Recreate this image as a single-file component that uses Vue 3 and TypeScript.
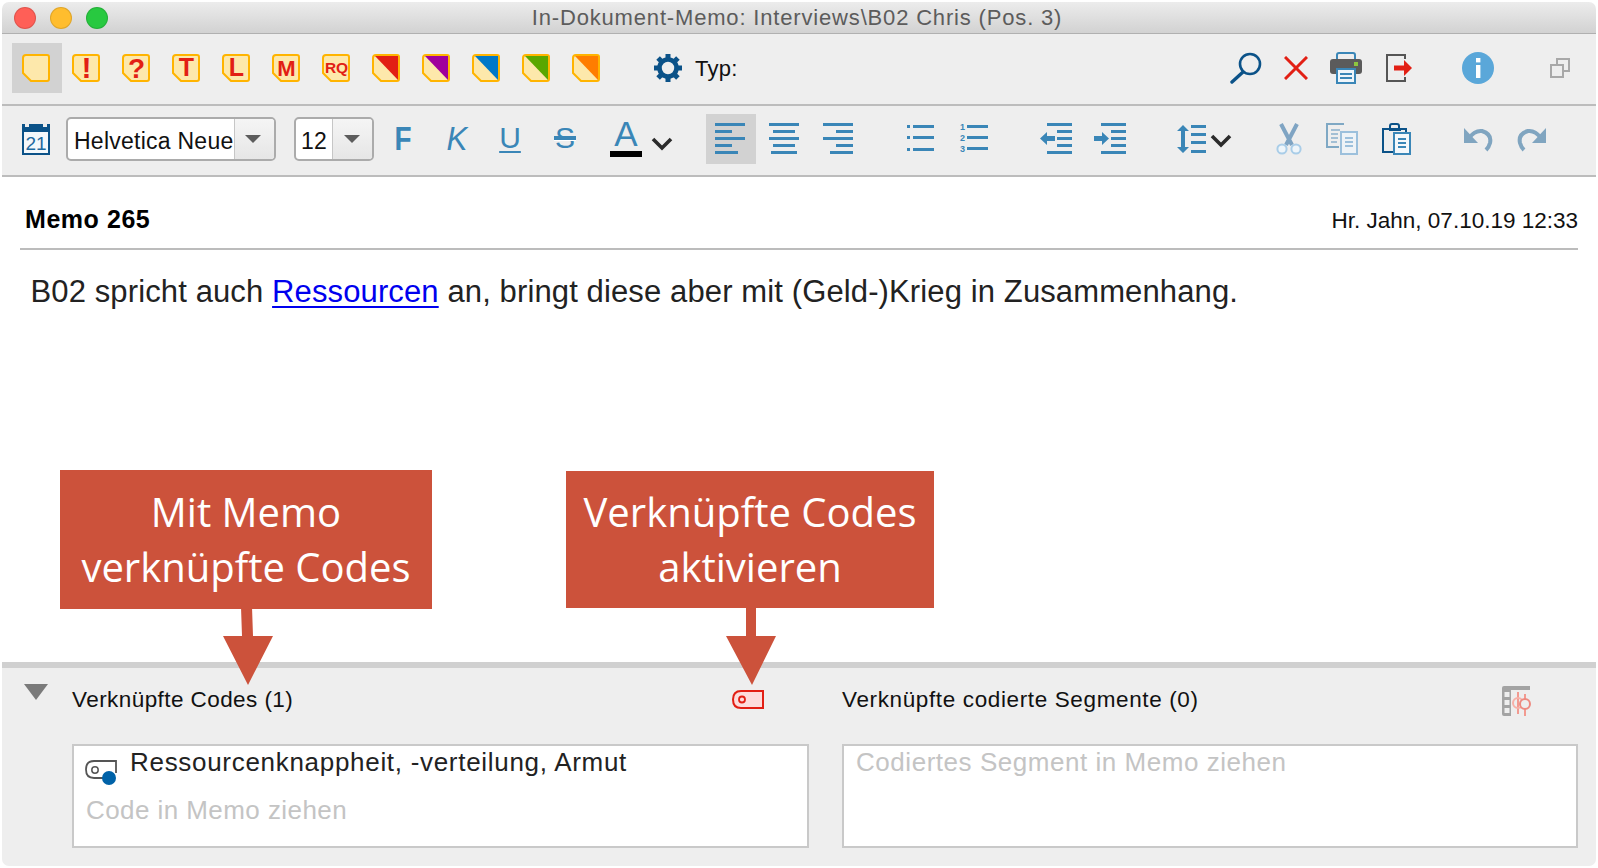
<script setup lang="ts">
interface Note { label?: string; size?: number; base?: number; corner?: string }
const notes: Note[] = [
  {},
  { label: '!', size: 30, base: 24 },
  { label: '?', size: 28, base: 24 },
  { label: 'T', size: 25, base: 22 },
  { label: 'L', size: 25, base: 22 },
  { label: 'M', size: 22, base: 22 },
  { label: 'RQ', size: 15.5, base: 19 },
  { corner: '#e21f14' },
  { corner: '#a0009c' },
  { corner: '#0078c8' },
  { corner: '#5aa700' },
  { corner: '#ff7d00' },
]
</script>

<template>
  <div class="window">
    <header class="titlebar">
      <div class="lights">
        <span class="light red"></span>
        <span class="light yellow"></span>
        <span class="light green"></span>
      </div>
      <span class="title">In-Dokument-Memo: Interviews\B02 Chris (Pos. 3)</span>
    </header>

    <div class="toolbar firstbar">
      <button
        v-for="(n, i) in notes"
        :key="i"
        class="cell"
        :class="{ on: i === 0 }"
      >
        <svg class="note" width="28" height="28" viewBox="0 0 28 28">
          <path d="M4 1H25Q27 1 27 3V25Q27 27 25 27H9L1 19V4Q1 1 4 1Z" fill="#fde8ab" stroke="#ffb400" stroke-width="2" />
          <path v-if="n.corner" d="M3 2H26V26Z" :fill="n.corner" />
          <text
            v-if="n.label"
            x="14.5"
            :y="n.base"
            text-anchor="middle"
            class="noteletter"
            :font-size="n.size"
          >{{ n.label }}</text>
        </svg>
      </button>

      <svg class="gear" width="28" height="28" viewBox="0 0 28 28">
        <circle cx="14" cy="14" r="8.5" fill="none" stroke="#0b5288" stroke-width="4.6" />
        <g fill="#0b5288">
          <rect x="11.5" y="0" width="5" height="6" />
          <rect x="11.5" y="22" width="5" height="6" />
          <rect x="0" y="11.5" width="6" height="5" />
          <rect x="22" y="11.5" width="6" height="5" />
          <rect x="11.5" y="0" width="5" height="6" transform="rotate(45 14 14)" />
          <rect x="11.5" y="22" width="5" height="6" transform="rotate(45 14 14)" />
          <rect x="0" y="11.5" width="6" height="5" transform="rotate(45 14 14)" />
          <rect x="22" y="11.5" width="6" height="5" transform="rotate(45 14 14)" />
        </g>
      </svg>
      <span class="typ">Typ:</span>

      <svg class="search" width="32" height="32" viewBox="0 0 32 32">
        <circle cx="20" cy="12" r="10" fill="none" stroke="#0b5288" stroke-width="2.6" />
        <path d="M13 20L2 30" stroke="#0b5288" stroke-width="3.4" stroke-linecap="round" />
      </svg>
      <svg class="close" width="24" height="24" viewBox="0 0 24 24">
        <path d="M1 1L23 23M23 1L1 23" stroke="#e21f14" stroke-width="3" />
      </svg>
      <svg class="printer" width="32" height="32" viewBox="0 0 32 32">
        <path d="M7 8V3Q7 1 9 1H23Q25 1 25 3V8" fill="none" stroke="#3a86b7" stroke-width="2" />
        <path d="M3 7H29Q32 7 32 10V19Q32 22 29 22H3Q0 22 0 19V10Q0 7 3 7Z" fill="#5b5b5b" />
        <rect x="24" y="10" width="4" height="4" fill="#8dc63f" />
        <rect x="7" y="17" width="18" height="14" fill="#eef5fa" stroke="#3a86b7" stroke-width="2" />
        <path d="M10 22H22M10 26H22" stroke="#3a86b7" stroke-width="2" />
      </svg>
      <svg class="export" width="26" height="28" viewBox="0 0 26 28">
        <path d="M19 5V1H1V27H19V23" fill="none" stroke="#555" stroke-width="2" />
        <path d="M8 11.5H18V6L26 14L18 22V16.5H8Z" fill="#e21f14" />
      </svg>
      <svg class="info" width="32" height="32" viewBox="0 0 32 32">
        <circle cx="16" cy="16" r="16" fill="#5aa7d9" />
        <rect x="14" y="6" width="4.4" height="4.4" fill="#fff" />
        <rect x="14" y="13" width="4.4" height="13" fill="#fff" />
      </svg>
      <svg class="winicon" width="20" height="20" viewBox="0 0 20 20">
        <path d="M7 7V1H19V13H13M1 7H13V19H1Z" fill="none" stroke="#a8a8a8" stroke-width="2" />
      </svg>
    </div>

    <div class="toolbar second">
      <svg class="calendar" width="28" height="31" viewBox="0 0 28 31">
        <rect width="28" height="31" fill="#0b5288" />
        <rect x="2" y="8" width="24" height="21" fill="#f4f8fb" />
        <rect x="3" y="0" width="4" height="3" fill="#eee" />
        <rect x="21" y="0" width="4" height="3" fill="#eee" />
        <text x="14" y="26" text-anchor="middle" class="caltext">21</text>
      </svg>

      <div class="combo fontcombo">
        <span class="value">Helvetica Neue</span>
        <span class="drop"><i class="caret"></i></span>
      </div>
      <div class="combo sizecombo">
        <span class="value">12</span>
        <span class="drop"><i class="caret"></i></span>
      </div>

      <span class="fmt bold">F</span>
      <span class="fmt ital">K</span>
      <span class="fmt under">U</span>
      <span class="fmt strike">S</span>
      <span class="fmt color">A</span>
      <svg class="chev1" width="28" height="32" viewBox="0 0 28 32">
        <path d="M5 16L14 25L23 16" fill="none" stroke="#2b2b2b" stroke-width="3.6" />
      </svg>

      <button class="cell alignbtn on">
        <svg width="50" height="50" viewBox="0 0 50 50" fill="#3a86b7">
          <rect x="9" y="9" width="30" height="3" />
          <rect x="9" y="16" width="17" height="3" />
          <rect x="9" y="23" width="30" height="3" />
          <rect x="9" y="30" width="17" height="3" />
          <rect x="9" y="37" width="23" height="3" />
        </svg>
      </button>
      <button class="cell aligncenter">
        <svg width="50" height="50" viewBox="0 0 50 50" fill="#3a86b7">
          <rect x="10" y="9" width="30" height="3" />
          <rect x="14" y="16" width="22" height="3" />
          <rect x="10" y="23" width="30" height="3" />
          <rect x="14" y="30" width="22" height="3" />
          <rect x="12" y="37" width="26" height="3" />
        </svg>
      </button>
      <button class="cell alignright">
        <svg width="50" height="50" viewBox="0 0 50 50" fill="#3a86b7">
          <rect x="10" y="9" width="30" height="3" />
          <rect x="23" y="16" width="17" height="3" />
          <rect x="10" y="23" width="30" height="3" />
          <rect x="23" y="30" width="17" height="3" />
          <rect x="17" y="37" width="23" height="3" />
        </svg>
      </button>

      <svg class="list" width="32" height="32" viewBox="0 0 32 32" fill="#3a86b7">
        <rect x="3" y="2" width="3" height="3" />
        <rect x="3" y="13" width="3" height="3" />
        <rect x="3" y="25" width="3" height="3" />
        <rect x="9" y="2" width="21" height="3" />
        <rect x="9" y="13" width="21" height="3" />
        <rect x="9" y="25" width="21" height="3" />
      </svg>
      <svg class="numlist" width="32" height="32" viewBox="0 0 32 32" fill="#3a86b7">
        <text x="2" y="7" class="num">1</text>
        <text x="2" y="18" class="num">2</text>
        <text x="2" y="29" class="num">3</text>
        <rect x="9" y="2" width="21" height="3" />
        <rect x="9" y="13" width="21" height="3" />
        <rect x="9" y="24" width="21" height="3" />
      </svg>
      <svg class="outdent" width="32" height="32" viewBox="0 0 32 32" fill="#3a86b7">
        <rect x="7" y="0" width="25" height="3" />
        <rect x="17" y="7" width="15" height="3" />
        <rect x="17" y="14" width="15" height="3" />
        <rect x="17" y="21" width="15" height="3" />
        <rect x="7" y="28" width="25" height="3" />
        <path d="M0 15.5L7 9V13H15V18H7V22Z" />
      </svg>
      <svg class="indent" width="32" height="32" viewBox="0 0 32 32" fill="#3a86b7">
        <rect x="7" y="0" width="25" height="3" />
        <rect x="17" y="7" width="15" height="3" />
        <rect x="17" y="14" width="15" height="3" />
        <rect x="17" y="21" width="15" height="3" />
        <rect x="7" y="28" width="25" height="3" />
        <path d="M15 15.5L8 9V13H0V18H8V22Z" />
      </svg>
      <svg class="spacing" width="30" height="32" viewBox="0 0 30 32" fill="#3a86b7">
        <path d="M6 2L12 8H8V24H12L6 30L0 24H4V8H0Z" />
        <rect x="14" y="2" width="15" height="3" />
        <rect x="14" y="10" width="15" height="3" />
        <rect x="14" y="18" width="15" height="3" />
        <rect x="14" y="27" width="15" height="3" />
      </svg>
      <svg class="chev2" width="28" height="32" viewBox="0 0 28 32">
        <path d="M5 13L14 22L23 13" fill="none" stroke="#2b2b2b" stroke-width="3.6" />
      </svg>

      <svg class="scissors" width="32" height="32" viewBox="0 0 32 32">
        <path d="M8 1L19 22M24 1L13 22" stroke="#7fa4c3" stroke-width="4" fill="none" />
        <circle cx="9" cy="26" r="4.6" fill="#eef5fa" stroke="#a9cde8" stroke-width="2" />
        <circle cx="23" cy="26" r="4.6" fill="#eef5fa" stroke="#a9cde8" stroke-width="2" />
      </svg>
      <svg class="copy" width="32" height="32" viewBox="0 0 32 32" fill="none">
        <path d="M18 1H1V24H13" stroke="#7fa8c4" stroke-width="2" />
        <path d="M5 7H14M5 11H12M5 15H12M5 19H11" stroke="#a3bfd4" stroke-width="2" />
        <path d="M15 9H31V31H15Z" fill="#eef3f7" stroke="#9cc0dc" stroke-width="2" />
        <path d="M19 15H27M19 19H27M19 23H27" stroke="#9cc0dc" stroke-width="2" />
      </svg>
      <svg class="paste" width="32" height="32" viewBox="0 0 32 32" fill="none">
        <path d="M13 29H3V6H10V3Q10 1 12 1H17Q19 1 19 3V6H26V9" stroke="#0b5288" stroke-width="2" />
        <rect x="9" y="5" width="12" height="3" fill="#0b5288" />
        <path d="M14 10H30V31H14Z" fill="#f4f8fb" stroke="#3a86b7" stroke-width="2" />
        <path d="M18 16H26M18 20H26M18 24H26" stroke="#3a86b7" stroke-width="2" />
      </svg>
      <svg class="undo" width="32" height="32" viewBox="0 0 32 32" fill="none">
        <path d="M2 5V20H16Z" fill="#80a5c0" />
        <path d="M7 15Q13 7 20 8Q30 11 28 20Q27 24 24 27" stroke="#80a5c0" stroke-width="4" />
      </svg>
      <svg class="redo" width="32" height="32" viewBox="0 0 32 32" fill="none">
        <path d="M30 5V20H16Z" fill="#80a5c0" />
        <path d="M25 15Q19 7 12 8Q2 11 4 20Q5 24 8 27" stroke="#80a5c0" stroke-width="4" />
      </svg>
    </div>

    <main class="memo">
      <div class="memohead">
        <strong class="memotitle">Memo 265</strong>
        <span class="memometa">Hr. Jahn, 07.10.19 12:33</span>
      </div>
      <p class="memotext">B02 spricht auch <a class="link">Ressourcen</a> an, bringt diese aber mit (Geld-)Krieg in Zusammenhang.</p>

      <div class="callout c1">Mit Memo<br />verknüpfte Codes</div>
      <div class="callout c2">Verknüpfte Codes<br />aktivieren</div>
      <svg class="arrow a1" width="52" height="78" viewBox="0 0 52 78">
        <path d="M19 0H30L31 29H51L26 78L1 29H20Z" fill="#cc523b" />
      </svg>
      <svg class="arrow a2" width="52" height="78" viewBox="0 0 52 78">
        <path d="M20 0H30L30 29H50L26 78L0 29H20Z" fill="#cc523b" />
      </svg>
    </main>

    <section class="panel">
      <svg class="toggle" width="24" height="16" viewBox="0 0 24 16">
        <path d="M0 0H24L12 16Z" fill="#7a7a7a" />
      </svg>
      <div class="group left">
        <div class="grouphead">
          <span>Verknüpfte Codes (1)</span>
          <svg class="redcode" width="32" height="19" viewBox="0 0 32 19">
            <path d="M31 1H9Q1 1 1 9.500Q1 18 9 18H31Z" fill="#fddcdc" stroke="#e21f14" stroke-width="2" />
            <circle cx="10" cy="9.500" r="3" fill="none" stroke="#e21f14" stroke-width="1.800" />
          </svg>
        </div>
        <div class="dropbox">
          <div class="coderow">
            <svg width="32" height="26" viewBox="0 0 32 26">
              <path d="M31 13V1H9Q1 1 1 9.500Q1 18 9 18H18" fill="none" stroke="#555" stroke-width="1.800" />
              <circle cx="10" cy="10" r="3.200" fill="none" stroke="#555" stroke-width="1.500" />
              <circle cx="24" cy="18" r="7" fill="#0062a8" />
            </svg>
            <span class="codename">Ressourcenknappheit, -verteilung, Armut</span>
          </div>
          <div class="placeholder hint">Code in Memo ziehen</div>
        </div>
      </div>
      <div class="group right">
        <div class="grouphead">
          <span>Verknüpfte codierte Segmente (0)</span>
          <svg class="tableicon" width="30" height="30" viewBox="0 0 30 30">
            <path d="M2 0H28V4H9V30H2Q0 30 0 28V2Q0 0 2 0Z" fill="#a3a3a3" />
            <path d="M2.500 6H7.500V11H2.500ZM2.500 14H7.500V19H2.500ZM2.500 22H7.500V27H2.500Z" fill="#eee" />
            <path d="M16 6V28M23 8V30" stroke="#f29a90" stroke-width="2" />
            <circle cx="16" cy="17" r="5" fill="none" stroke="#f7b0a8" stroke-width="2" />
            <circle cx="23" cy="18" r="5" fill="#eee" stroke="#ee8a80" stroke-width="2" />
          </svg>
        </div>
        <div class="dropbox">
          <div class="placeholder seg">Codiertes Segment in Memo ziehen</div>
        </div>
      </div>
    </section>
  </div>
</template>

<style scoped>
.window {
  position: relative;
  box-sizing: border-box;
  width: 1594px;
  height: 864px;
  margin: 2px 2px 0;
  display: flex;
  flex-direction: column;
  background: #fff;
  border-radius: 7px;
  overflow: hidden;
  font-family: "Liberation Sans", Arial, sans-serif;
  color: #111;
}
.titlebar {
  position: relative;
  flex: none;
  height: 32px;
  box-sizing: border-box;
  display: flex;
  align-items: center;
  justify-content: center;
  background: linear-gradient(#ececec, #d2d2d2);
  border-bottom: 1px solid #b0b0b0;
}
.lights {
  position: absolute;
  left: 12px;
  top: 5px;
  display: flex;
  gap: 14px;
}
.light {
  box-sizing: border-box;
  width: 22px;
  height: 22px;
  border-radius: 50%;
  border: 1px solid rgba(0, 0, 0, 0.12);
}
.red { background: #ff5f57; }
.yellow { background: #ffbd2e; }
.green { background: #28c940; }
.title {
  margin-right: 4px;
  font-size: 22px;
  color: #5c5c5c;
  letter-spacing: 0.83px;
}
.toolbar {
  flex: none;
  display: flex;
  align-items: center;
  box-sizing: border-box;
  background: #eeeeee;
  border-bottom: 2px solid #bcbcbc;
}
.toolbar svg { flex: none; display: block; }
.toolbar svg.note { overflow: visible; margin-right: 2px; }
.firstbar {
  height: 72px;
  padding: 0 26px 2px 10px;
}
.second {
  height: 71px;
  padding: 0 0 3px 20px;
}
.cell {
  flex: none;
  width: 50px;
  height: 50px;
  padding: 0;
  border: 0;
  background: transparent;
  display: flex;
  align-items: center;
  justify-content: center;
}
.cell.on { background: #d2d2d2; }
.noteletter {
  font-family: "Liberation Sans", Arial, sans-serif;
  font-weight: 700;
  fill: #e21f14;
}
.gear { margin-left: 42px; }
.typ { margin: 2px 0 0 13px; font-size: 22px; color: #111; letter-spacing: 0.3px; }
.search { margin-left: auto; }
.close { margin-left: 22px; }
.printer { margin-left: 22px; }
.export { margin-left: 24px; }
.info { margin-left: 50px; }
.winicon { margin-left: 56px; }
.caltext {
  font-family: "Liberation Sans", Arial, sans-serif;
  font-size: 19px;
  fill: #1f6aa0;
}
.combo {
  flex: none;
  box-sizing: border-box;
  height: 44px;
  display: flex;
  background: #fff;
  border: 2px solid #ababab;
  border-radius: 5px;
  overflow: hidden;
}
.fontcombo { width: 210px; margin-left: 16px; }
.sizecombo { width: 80px; margin-left: 18px; }
.value {
  flex: 1;
  padding-left: 6px;
  font-size: 23px;
  line-height: 44px;
  color: #111;
  white-space: nowrap;
  letter-spacing: 0.25px;
}
.sizecombo .value { padding-left: 5px; }
.fontcombo .drop { width: 40px; padding-right: 3px; }
.sizecombo .drop { width: 40px; padding-right: 2px; }
.drop {
  flex: none;
  display: flex;
  align-items: center;
  justify-content: center;
  box-sizing: border-box;
  background: linear-gradient(#f5f5f5, #e6e6e6);
  border-left: 1px solid #c6c6c6;
}
.caret {
  width: 0;
  height: 0;
  border-left: 8px solid transparent;
  border-right: 8px solid transparent;
  border-top: 8px solid #5c5c5c;
}
.fmt {
  flex: none;
  width: 32px;
  height: 36px;
  text-align: center;
  color: #3a86b7;
  font-size: 34px;
  line-height: 34px;
}
.bold { margin-left: 13px; font-weight: 700; transform: scaleX(0.82); }
.ital { margin-left: 22px; font-style: italic; transform: scaleX(0.92); }
.under {
  margin-left: 21px;
  font-size: 30px;
  text-decoration: underline;
  text-underline-offset: 3px;
  text-decoration-thickness: 2px;
}
.strike {
  position: relative;
  margin-left: 23px;
  font-size: 30px;
}
.strike::after {
  content: "";
  position: absolute;
  left: 5px;
  right: 5px;
  top: 15px;
  height: 4px;
  background: #3a86b7;
  border-bottom: 1px solid #fff;
}
.color {
  margin-left: 29px;
  margin-bottom: 3px;
  box-sizing: border-box;
  height: 38px;
  line-height: 30px;
  font-size: 35px;
  border-bottom: 6px solid #000;
}
.chev1 { margin-left: 6px; }
.alignbtn { margin-left: 30px; }
.aligncenter { margin-left: 3px; }
.alignright { margin-left: 4px; }
.list { margin-left: 41px; }
.numlist { margin-left: 22px; }
.num {
  font-family: "Liberation Sans", Arial, sans-serif;
  font-size: 9px;
  font-weight: 700;
}
.outdent { margin-left: 50px; }
.indent { margin-left: 22px; }
.spacing { margin-left: 51px; }
.scissors { margin-left: 38px; }
.copy { margin-left: 21px; }
.paste { margin-left: 22px; }
.undo { margin-left: 50px; }
.redo { margin-left: 22px; }

.memo {
  position: relative;
  z-index: 1;
  flex: 1;
  min-height: 0;
}
.memohead {
  box-sizing: border-box;
  height: 73px;
  margin: 0 18px;
  padding: 0 0 12px 5px;
  display: flex;
  align-items: flex-end;
  justify-content: space-between;
  border-bottom: 2px solid #bcbcbc;
}
.memotitle { font-size: 25px; color: #000; line-height: 32px; letter-spacing: 0.55px; margin-bottom: 1px; }
.memometa { font-size: 22.5px; color: #111; line-height: 32px; margin-bottom: -1px; }
.memotext {
  margin: 22px 0 0 28.500px;
  font-size: 31px;
  line-height: 40px;
  color: #222;
  letter-spacing: 0.12px;
}
.link {
  color: #0000ee;
  text-decoration: underline;
  text-underline-offset: 4px;
  text-decoration-thickness: 1.500px;
}
.callout {
  position: absolute;
  box-sizing: border-box;
  text-align: center;
  background: #cc523b;
  color: #fff;
  font-family: "Open Sans", sans-serif;
  font-size: 40px;
  line-height: 55px;
}
.c1 { left: 58px; top: 293px; width: 372px; height: 139px; padding-top: 14px; }
.c2 { left: 564px; top: 294px; width: 368px; height: 137px; padding-top: 13px; }
.arrow { position: absolute; display: block; }
.a1 { left: 220px; top: 430px; }
.a2 { left: 724px; top: 430px; }

.panel {
  flex: none;
  position: relative;
  box-sizing: border-box;
  height: 204px;
  padding: 0 18px 18px 22px;
  display: flex;
  background: #eeeeee;
  border-top: 6px solid #d0d0d0;
}
.toggle { flex: none; margin: 16px 24px 0 0; }
.group { display: flex; flex-direction: column; }
.group.left { width: 737px; margin-right: 33px; }
.group.right { width: 736px; }
.grouphead {
  flex: none;
  height: 76px;
  box-sizing: border-box;
  display: flex;
  align-items: center;
  justify-content: space-between;
  font-size: 22.5px;
  color: #111;
  padding-bottom: 12px;
}
.redcode { margin-top: -1px; }
.tableicon { margin-top: 2px; }
.left .grouphead { padding-right: 45px; }
.right .grouphead { padding-right: 46px; }
.left .grouphead span { letter-spacing: 0.43px; }
.right .grouphead span { letter-spacing: 0.63px; }
.dropbox {
  flex: 1;
  box-sizing: border-box;
  background: #fff;
  border: 2px solid #c9c9c9;
  padding: 0 0 0 11px;
}
.coderow {
  display: flex;
  align-items: flex-start;
  height: 40px;
}
.coderow svg { flex: none; margin-top: 14px; }
.codename {
  margin-left: 13px;
  font-size: 26px;
  line-height: 32px;
  color: #222;
  letter-spacing: 0.7px;
}
.placeholder {
  font-size: 26px;
  color: #c4c4c4;
  line-height: 34px;
}
.hint { margin-top: 7px; padding-left: 1px; letter-spacing: 0.43px; }
.seg { padding-left: 1px; letter-spacing: 0.54px; margin-top: -1px; }
</style>

<style>
html, body { background: #fff; overflow: hidden; }
</style>
